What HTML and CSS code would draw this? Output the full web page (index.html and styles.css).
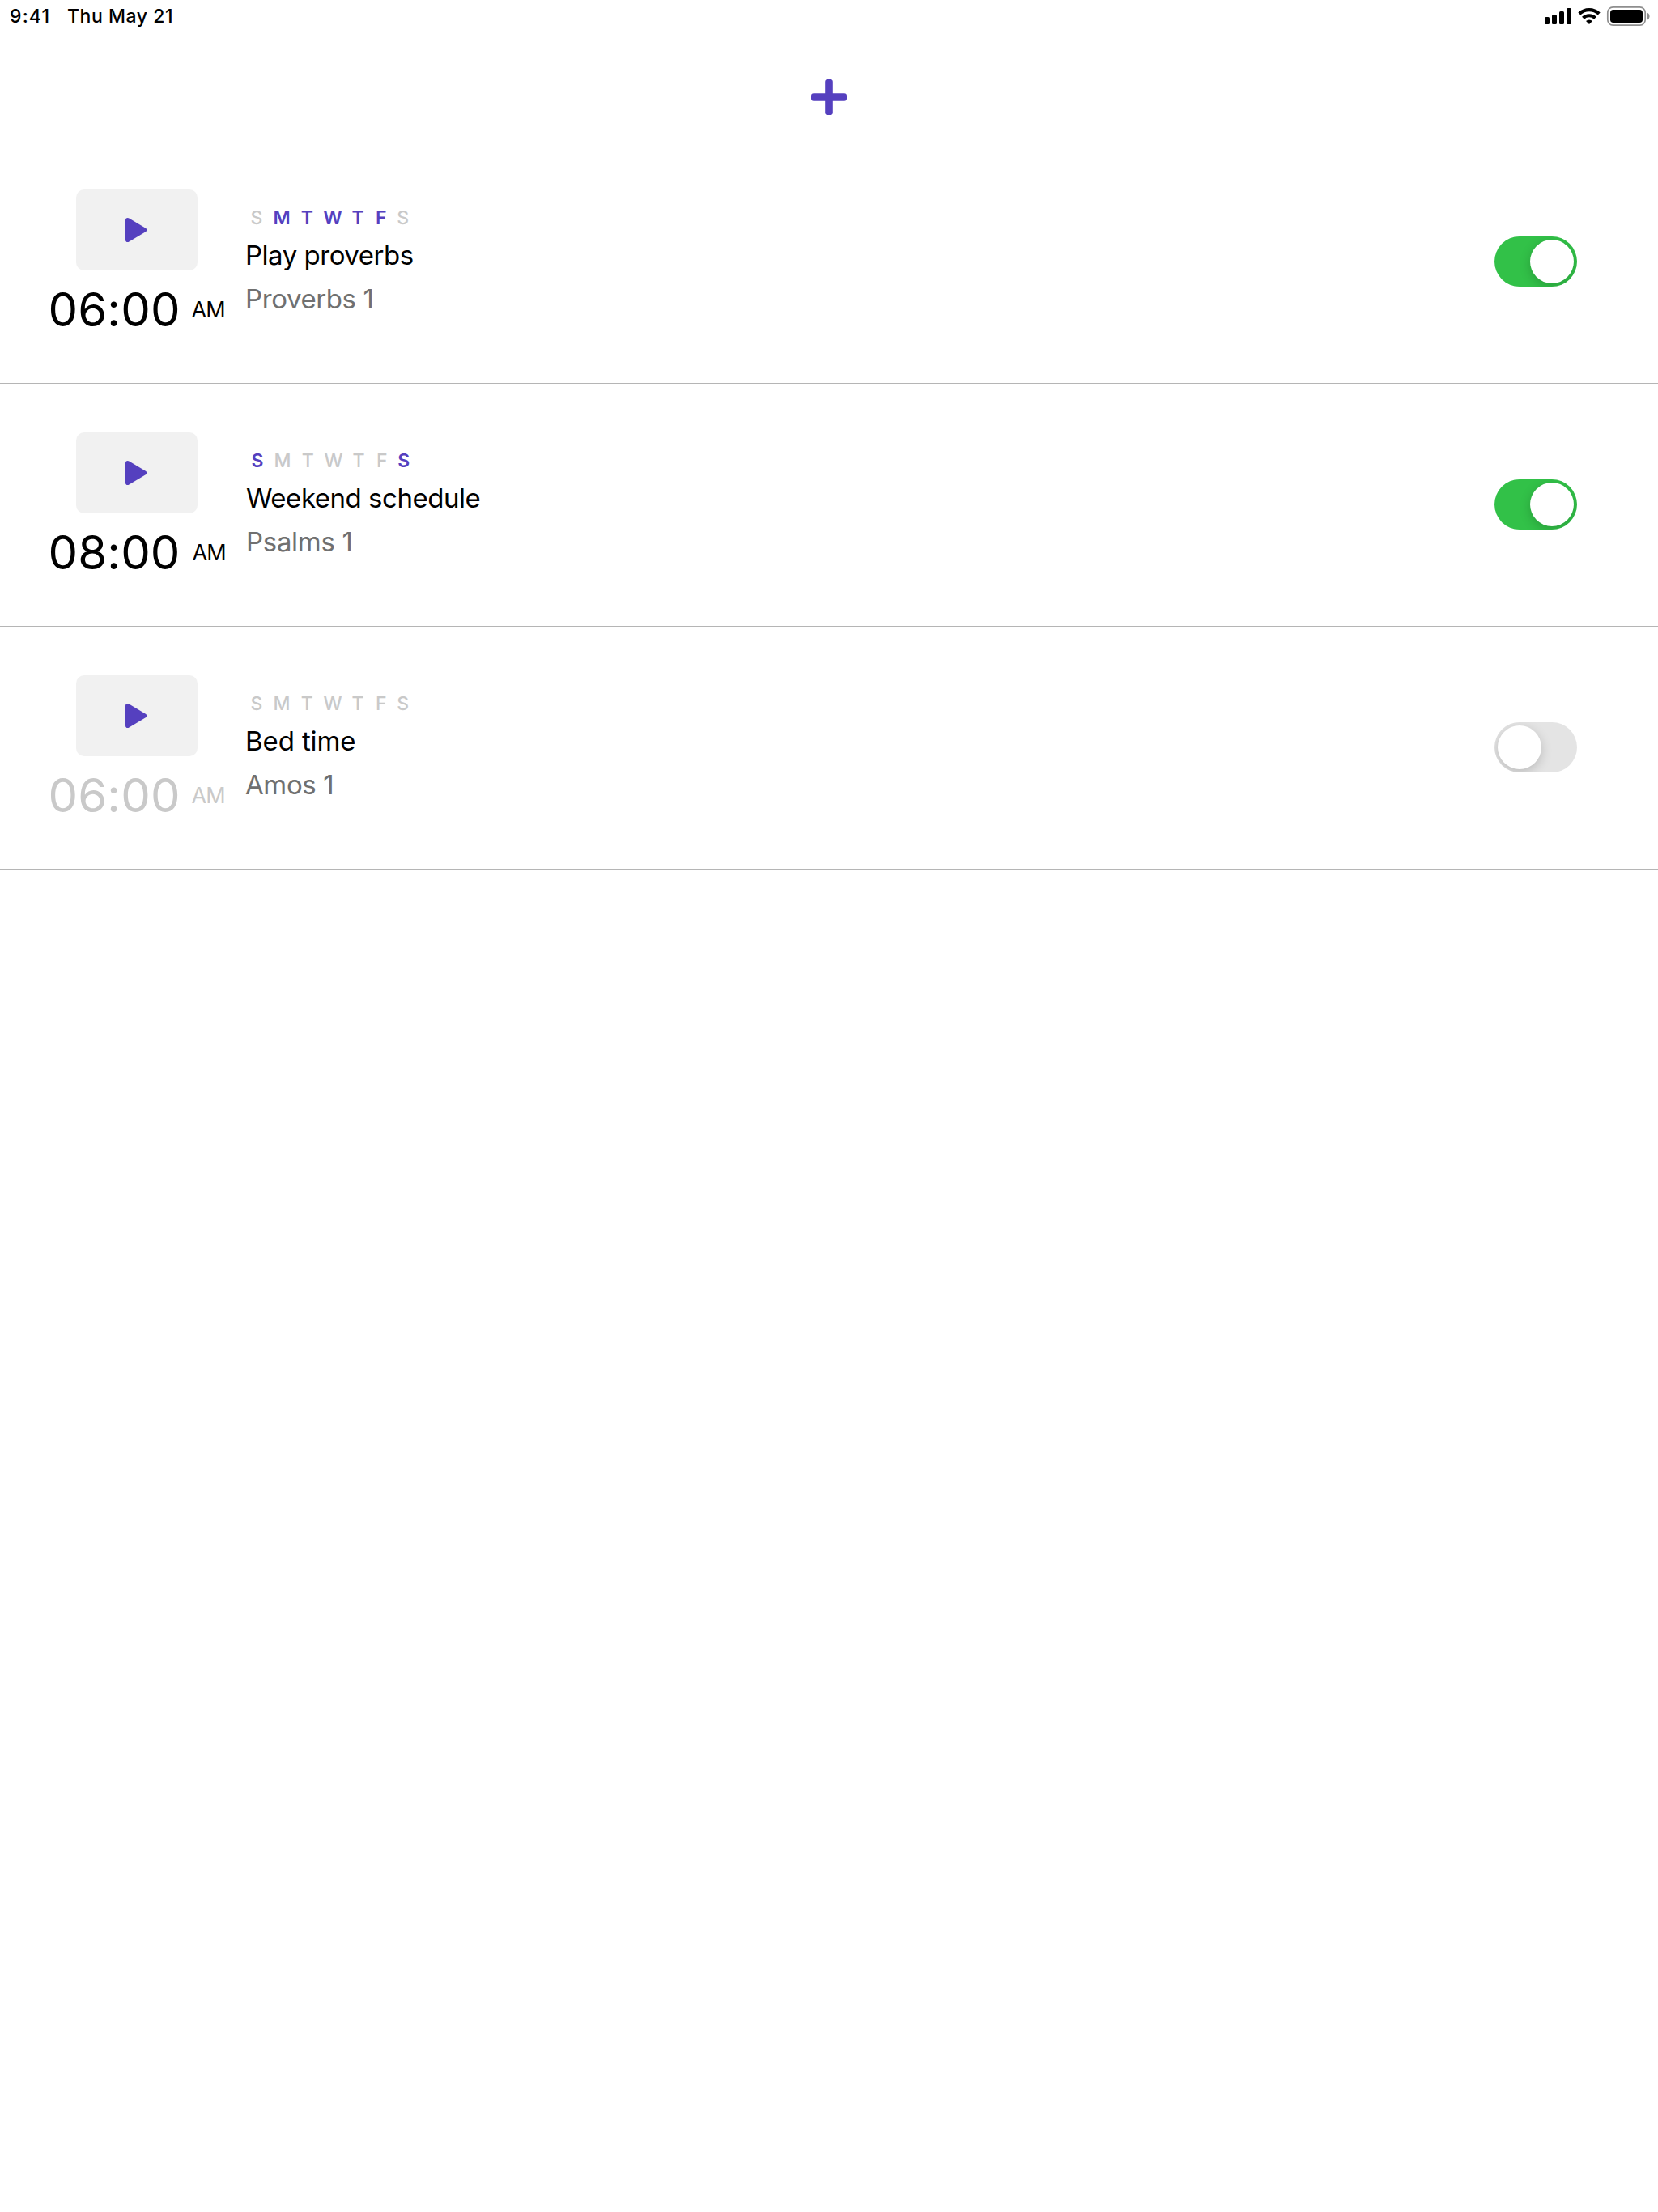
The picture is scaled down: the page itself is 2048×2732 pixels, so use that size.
FILE: index.html
```
<!DOCTYPE html>
<html lang="en">
<head>
<meta charset="utf-8">
<title>Alarms</title>
<link rel="stylesheet" href="styles.css">
</head>
<body>
<header class="status">
  <span class="status-time">9:41</span>
  <span class="status-date">Thu May 21</span>
  <svg class="status-icons" width="132" height="26" viewBox="1908 7 132 26" aria-hidden="true">
    <rect x="1908" y="21" width="6" height="9" rx="1.6"/>
    <rect x="1917" y="18" width="6" height="12" rx="1.6"/>
    <rect x="1926" y="14" width="6" height="16" rx="1.6"/>
    <rect x="1935" y="10" width="6" height="20" rx="1.6"/>
    <path d="M1950.8 17.100a17.600 17.600 0 0 1 24.400 0M1955.500 22.300a10.800 10.800 0 0 1 15 0" fill="none" stroke="#000" stroke-width="4.200"/>
    <path d="M1963 30l-4-4a6 6 0 0 1 8 0z"/>
    <rect x="1985.8" y="8.8" width="46.4" height="22.4" rx="6.6" fill="none" stroke="#8e8e8e" stroke-width="1.7"/>
    <rect x="1989" y="12" width="40" height="16" rx="3.8"/>
    <path d="M2035 15.7a5.2 5.2 0 0 1 0 8.900z" fill="#8e8e8e"/>
  </svg>
</header>
<div class="toolbar">
  <svg width="44" height="44" viewBox="0 0 44 44" aria-label="Add alarm"><path d="M17.2 3a3 3 0 0 1 3-3h3.600a3 3 0 0 1 3 3v14.200H41a3 3 0 0 1 3 3v3.600a3 3 0 0 1-3 3H26.800V41a3 3 0 0 1-3 3h-3.600a3 3 0 0 1-3-3V26.800H3a3 3 0 0 1-3-3v-3.600a3 3 0 0 1 3-3h14.200z" fill="#5540bf"/></svg>
</div>
<main>
  <section class="alarm">
    <div class="when">
      <div class="thumb"><svg class="play" width="27" height="30" viewBox="0 0 27 30"><path d="M0 2.8Q0 0 2.8 0Q3.6 0 4.4.5L25.300 12.900Q27.300 14.900 25.300 16.900L4.400 29.500Q3.600 30 2.800 30Q0 30 0 27.200z"/></svg></div>
      <div class="clock"><span class="time">06:00</span><span class="ampm">AM</span></div>
    </div>
    <div class="info">
      <div class="days"><span>S</span><span class="on">M</span><span class="on">T</span><span class="on">W</span><span class="on">T</span><span class="on">F</span><span>S</span></div>
      <div class="title">Play proverbs</div>
      <div class="passage">Proverbs 1</div>
    </div>
    <div class="switch switch-on"><span class="knob"></span></div>
  </section>
  <section class="alarm alarm-weekend">
    <div class="when">
      <div class="thumb"><svg class="play" width="27" height="30" viewBox="0 0 27 30"><path d="M0 2.8Q0 0 2.8 0Q3.6 0 4.4.5L25.300 12.900Q27.300 14.900 25.300 16.900L4.400 29.500Q3.600 30 2.800 30Q0 30 0 27.200z"/></svg></div>
      <div class="clock"><span class="time">08:00</span><span class="ampm">AM</span></div>
    </div>
    <div class="info">
      <div class="days"><span class="on">S</span><span>M</span><span>T</span><span>W</span><span>T</span><span>F</span><span class="on">S</span></div>
      <div class="title">Weekend schedule</div>
      <div class="passage">Psalms 1</div>
    </div>
    <div class="switch switch-on"><span class="knob"></span></div>
  </section>
  <section class="alarm alarm-off">
    <div class="when">
      <div class="thumb"><svg class="play" width="27" height="30" viewBox="0 0 27 30"><path d="M0 2.8Q0 0 2.8 0Q3.6 0 4.4.5L25.300 12.900Q27.300 14.900 25.300 16.900L4.400 29.500Q3.600 30 2.800 30Q0 30 0 27.200z"/></svg></div>
      <div class="clock"><span class="time">06:00</span><span class="ampm">AM</span></div>
    </div>
    <div class="info">
      <div class="days"><span>S</span><span>M</span><span>T</span><span>W</span><span>T</span><span>F</span><span>S</span></div>
      <div class="title">Bed time</div>
      <div class="passage">Amos 1</div>
    </div>
    <div class="switch"><span class="knob"></span></div>
  </section>
</main>
</body>
</html>
```
FILE: styles.css
```
* { box-sizing: border-box; }
body {
  margin: 0;
  min-height: 100vh;
  background: #fff;
  color: #000;
  font-family: Inter, "Liberation Sans", sans-serif;
}
svg { display: block; }

.status {
  display: flex;
  height: 40px;
  padding: 6px 8px 0 12px;
  font-size: 23px;
  font-weight: 500;
  line-height: 28px;
  white-space: nowrap;
}
.status-time { width: 71px; letter-spacing: 1.2px; }
.status-date { letter-spacing: .55px; }
.status-icons { margin: 1px 0 0 auto; }

.toolbar {
  display: flex;
  justify-content: center;
  height: 134px;
  padding-top: 58px;
}

.alarm {
  display: flex;
  height: 300px;
  padding: 60px 100px 0 59px;
  border-bottom: 1px solid #b5b5b5;
}
.when { width: 244px; }
.thumb {
  width: 150px;
  height: 100px;
  margin-left: 35px;
  padding: 35px 0 0 61px;
  border-radius: 10px;
  background: #f1f1f1;
}
.play { fill: #5540bf; }
.clock {
  display: flex;
  margin-top: 13px;
  padding-left: .5px;
  white-space: nowrap;
}
.time {
  width: 177px;
  font-size: 58px;
  line-height: 70px;
  letter-spacing: .15px;
}
.ampm {
  margin-top: 19px;
  font-size: 27px;
  line-height: 33px;
  letter-spacing: -.8px;
}

.info { flex: 1; padding-top: 21px; white-space: nowrap; }
.days {
  display: grid;
  grid-template-columns: 31px 31px 31.5px 32px 30px 27.5px 26.5px;
  margin-left: -1.5px;
  color: #c9c9c9;
  font-size: 23px;
  font-weight: 500;
  line-height: 28px;
  text-align: center;
}
.days .on { color: #5540bf; font-weight: 600; }
.title {
  margin-top: 12px;
  font-size: 33px;
  line-height: 40px;
  letter-spacing: -.48px;
}
.passage {
  margin-top: 14px;
  color: #707070;
  font-size: 33px;
  line-height: 40px;
  letter-spacing: -.4px;
}

.alarm-weekend .when { width: 245px; }
.alarm-weekend .time { width: 178px; }
.alarm-weekend .passage { letter-spacing: -.3px; }
.alarm-off .clock { color: #c9c9c9; }
.alarm-off .title { letter-spacing: -.1px; }

.switch {
  display: flex;
  width: 102px;
  height: 62px;
  margin-top: 58px;
  padding: 4px;
  border-radius: 31px;
  background: #e4e4e4;
  overflow: hidden;
}
.switch-on { justify-content: flex-end; background: #32c148; }
.knob {
  width: 54px;
  height: 54px;
  border-radius: 50%;
  background: #fff;
  box-shadow: 0 4px 14px rgba(0, 0, 0, .18);
}
```
